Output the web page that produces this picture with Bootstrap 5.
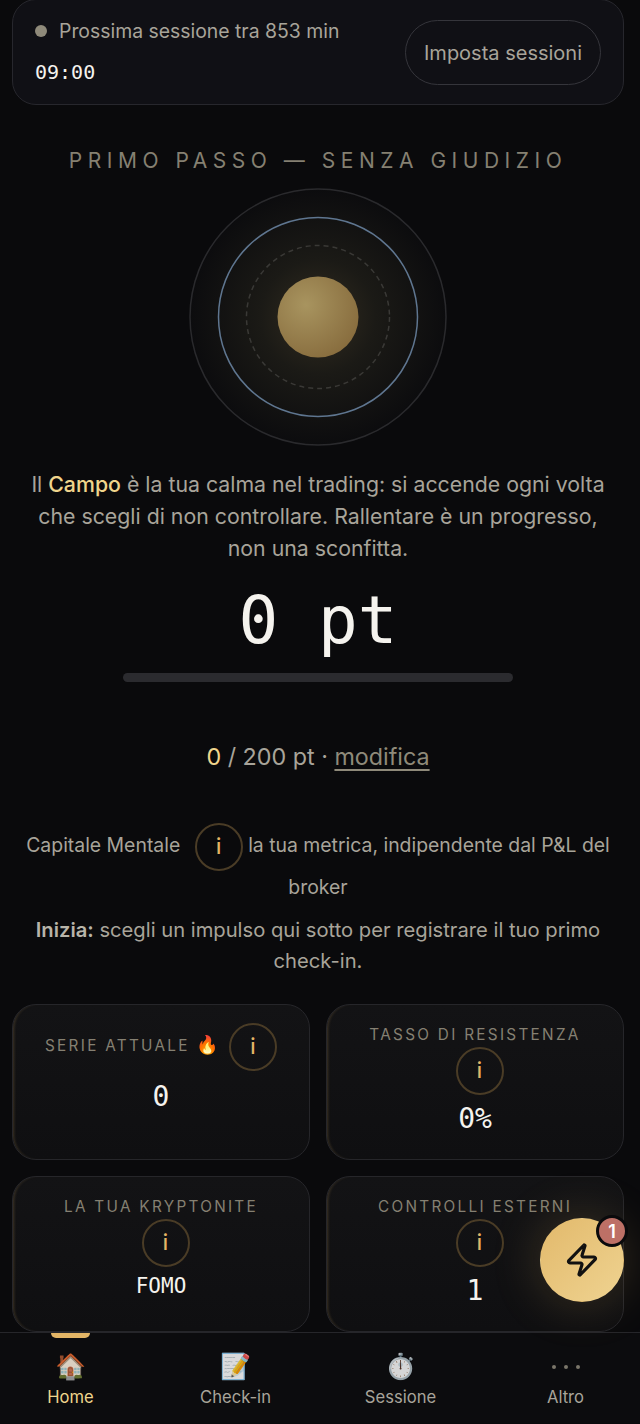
<!DOCTYPE html>
<html lang="it">
<head>
  <meta charset="UTF-8" />
  <meta name="viewport" content="width=device-width, initial-scale=1.0"/>
  <title>Home | Campo</title>
  <link href="https://cdn.jsdelivr.net/npm/bootstrap@5.3.3/dist/css/bootstrap.min.css" rel="stylesheet">
  <style>
    html, body { height: 100%; }
    body {
      background-color: #0a0a0c;
      color: #a8a49a;
      font-family: Inter, "Noto Sans", sans-serif;
      overflow: hidden;
    }
    .mono { font-family: "DejaVu Sans Mono", "Liberation Mono", monospace; }

    .page-wrap { height: 1333px; overflow: hidden; padding: 0 16px 0 12px; margin-top: -1px; }

    .session-card {
      background-color: #101015;
      border: 1px solid #27272d;
      border-radius: 24px;
      height: 106px;
      padding: 0 22px;
    }
    .session-left { padding-bottom: 2px; }
    .session-dot { width: 12px; height: 12px; border-radius: 50%; background-color: #8f8a7a; }
    .session-text { font-size: 19.4px; line-height: 26px; color: #a8a49a; }
    .session-time { font-size: 20px; line-height: 24px; color: #f5f3ee; margin-top: 16px; }
    .session-btn {
      width: 196px; height: 65px;
      background: transparent;
      border: 1px solid #35353b;
      border-radius: 33px;
      color: #a8a49a;
      font-size: 20px;
      padding: 2px 0 0;
    }

    .step-title { font-size: 21px; letter-spacing: 0.263em; color: #858072; line-height: 24px; margin: 44px 0 15px; white-space: nowrap; }

    .orb-box { width: 258px; height: 258px; }
    .orb-box svg { display: block; }

    .intro-text { font-size: 21.3px; line-height: 32px; color: #a8a49a; margin: 22px 0 0; padding: 0 16px; }
    .intro-text b { font-weight: 500; color: #f0d58c; }

    .points-big { font-size: 66px; line-height: 78px; color: #f5f3ee; margin-top: 18px; }
    .points-bar { width: 390px; height: 9px; border-radius: 5px; background-color: #2b2b2f; margin-top: 13px; }

    .goal-line { font-size: 23.3px; line-height: 32px; color: #a8a49a; margin-top: 59px; }
    .goal-line b { font-weight: 400; color: #f0d58c; }
    .goal-line a { color: #8f8a7a; text-underline-offset: 4px; }

    .info-line { font-size: 19.4px; line-height: 32px; color: #a8a49a; margin-top: 50px; }
    .info-dot {
      display: inline-flex; align-items: center; justify-content: center;
      width: 48px; height: 48px;
      margin-left: 9px;
      border: 2px solid #4a3c26;
      border-radius: 50%;
      color: #e3b566;
      font-size: 21px;
      font-weight: 500;
      letter-spacing: 0;
      vertical-align: middle;
    }
    .start-line { font-size: 20.2px; line-height: 31px; color: #a8a49a; margin: 11px 0 0; }
    .start-line b { font-weight: 600; color: #b8b4a9; }

    .stat-grid { display: grid; grid-template-columns: 298px 298px; gap: 16px; margin-top: 28px; }
    .stat-box {
      height: 156px;
      background: linear-gradient(180deg, #131315, #0f0f11);
      border: 1px solid #26262a;
      border-radius: 24px;
      box-shadow: inset 3px 0 3px -2px rgba(227,181,102,.22);
      padding-top: 18px;
    }
    .stat-label { font-size: 15.3px; letter-spacing: 0.15em; line-height: 24px; color: #858072; white-space: nowrap; }
    .stat-emoji { font-size: 18px; letter-spacing: 0; }
    .stat-value { font-size: 28px; line-height: 32px; color: #f5f3ee; margin-top: 8px; }
    .stat-first { margin-top: 10px; }
    .stat-word { font-size: 21px; line-height: 22px; }

    .bottom-bar {
      height: 91px;
      background-color: #0c0c0e;
      border-top: 1px solid #26262a;
      margin-left: -12px;
    }
    .bar-item { flex: 0 0 165px; color: #a8a49a; font-size: 16.6px; line-height: 20px; text-decoration: none; padding-top: 16px; }
    .bar-item.is-active { color: #f0d58c; }
    .bar-icon { height: 36px; font-size: 25px; line-height: 36px; font-family: "Noto Color Emoji", sans-serif; margin-bottom: 2px; opacity: .85; }
    .bar-dot { width: 4px; height: 4px; border-radius: 50%; background-color: #8f8a7a; }
    .bar-tab { top: 0; left: 63px; width: 39px; height: 5px; background-color: #e3b566; border-radius: 0 0 5px 5px; }

    .quick-btn {
      right: 16px; top: 1218px;
      width: 84px; height: 84px;
      background: linear-gradient(135deg, #e2b96b, #efd391);
      box-shadow: 0 0 50px rgba(227,181,102,.22);
      z-index: 5;
    }
    .quick-count {
      top: -4px; right: -5px;
      width: 32px; height: 32px;
      background-color: #bd7066;
      border: 3px solid #0a0a0c;
      color: #fff;
      font-size: 18px;
      font-weight: 600;
    }
  </style>
</head>
<body>

  <div class="page-wrap">
    <div class="session-card d-flex align-items-center justify-content-between">
      <div class="session-left">
        <div class="d-flex align-items-center gap-2">
          <span class="session-dot me-1"></span>
          <span class="session-text">Prossima sessione tra 853 min</span>
        </div>
        <div class="session-time mono">09:00</div>
      </div>
      <button class="btn session-btn">Imposta sessioni</button>
    </div>

    <div class="text-center">
      <div class="step-title">PRIMO PASSO — SENZA GIUDIZIO</div>

      <div class="orb-box mx-auto">
        <svg width="258" height="258" viewBox="0 0 258 258">
          <defs>
            <radialGradient id="glow">
              <stop offset="0" stop-color="#332d20"/>
              <stop offset="0.45" stop-color="#1b1a16"/>
              <stop offset="1" stop-color="#0c0c0e"/>
            </radialGradient>
            <radialGradient id="core" cx="0.35" cy="0.35" r="0.8">
              <stop offset="0" stop-color="#a8945f"/>
              <stop offset="1" stop-color="#84683a"/>
            </radialGradient>
          </defs>
          <circle cx="129" cy="129" r="128" fill="url(#glow)" stroke="#2a2a2d" stroke-width="1.5"/>
          <circle cx="129" cy="129" r="99.5" fill="none" stroke="#5f7690" stroke-width="1.5"/>
          <circle cx="129" cy="129" r="71.5" fill="none" stroke="#3a3936" stroke-width="1.5" stroke-dasharray="5 4"/>
          <circle cx="129" cy="129" r="40.5" fill="url(#core)"/>
        </svg>
      </div>

      <p class="intro-text">Il <b>Campo</b> è la tua calma nel trading: si accende ogni volta che scegli di non controllare. Rallentare è un progresso, non una sconfitta.</p>

      <div class="points-big mono">0 pt</div>
      <div class="points-bar mx-auto"></div>

      <div class="goal-line"><b>0</b> / 200 pt · <a href="#">modifica</a></div>

      <div class="info-line">Capitale Mentale <span class="info-dot">i</span> la tua metrica, indipendente dal P&amp;L del broker</div>
      <p class="start-line"><b>Inizia:</b> scegli un impulso qui sotto per registrare il tuo primo check-in.</p>
    </div>

    <div class="stat-grid text-center">
      <div class="stat-box">
        <div class="stat-label">SERIE ATTUALE <span class="stat-emoji">🔥</span> <span class="info-dot ms-1">i</span></div>
        <div class="stat-value stat-first mono">0</div>
      </div>
      <div class="stat-box">
        <div class="stat-label">TASSO DI RESISTENZA</div>
        <span class="info-dot">i</span>
        <div class="stat-value mono">0%</div>
      </div>
      <div class="stat-box">
        <div class="stat-label">LA TUA KRYPTONITE</div>
        <span class="info-dot">i</span>
        <div class="stat-value stat-word mono">FOMO</div>
      </div>
      <div class="stat-box">
        <div class="stat-label">CONTROLLI ESTERNI</div>
        <span class="info-dot">i</span>
        <div class="stat-value mono">1</div>
      </div>
    </div>
  </div>

  <nav class="bottom-bar position-relative d-flex text-center">
    <span class="bar-tab position-absolute"></span>
    <a class="bar-item is-active" href="#"><div class="bar-icon">🏠</div>Home</a>
    <a class="bar-item" href="#"><div class="bar-icon">📝</div>Check-in</a>
    <a class="bar-item" href="#"><div class="bar-icon">⏱️</div>Sessione</a>
    <a class="bar-item" href="#"><div class="bar-icon d-flex align-items-center justify-content-center gap-2"><span class="bar-dot"></span><span class="bar-dot"></span><span class="bar-dot"></span></div>Altro</a>
  </nav>

  <button class="quick-btn btn rounded-circle position-absolute d-flex align-items-center justify-content-center p-0">
    <svg width="36" height="36" viewBox="0 0 24 24" fill="none" stroke="#111" stroke-width="2.1" stroke-linejoin="round" stroke-linecap="round">
      <path d="M4 14a1 1 0 0 1-.78-1.63l9.9-10.2a.5.5 0 0 1 .86.46l-1.92 6.02A1 1 0 0 0 13 10h7a1 1 0 0 1 .78 1.63l-9.9 10.2a.5.5 0 0 1-.86-.46l1.92-6.02A1 1 0 0 0 11 14z"/>
    </svg>
    <span class="quick-count rounded-circle position-absolute d-flex align-items-center justify-content-center">1</span>
  </button>

  <script src="https://cdn.jsdelivr.net/npm/bootstrap@5.3.3/dist/js/bootstrap.bundle.min.js"></script>
</body>
</html>
